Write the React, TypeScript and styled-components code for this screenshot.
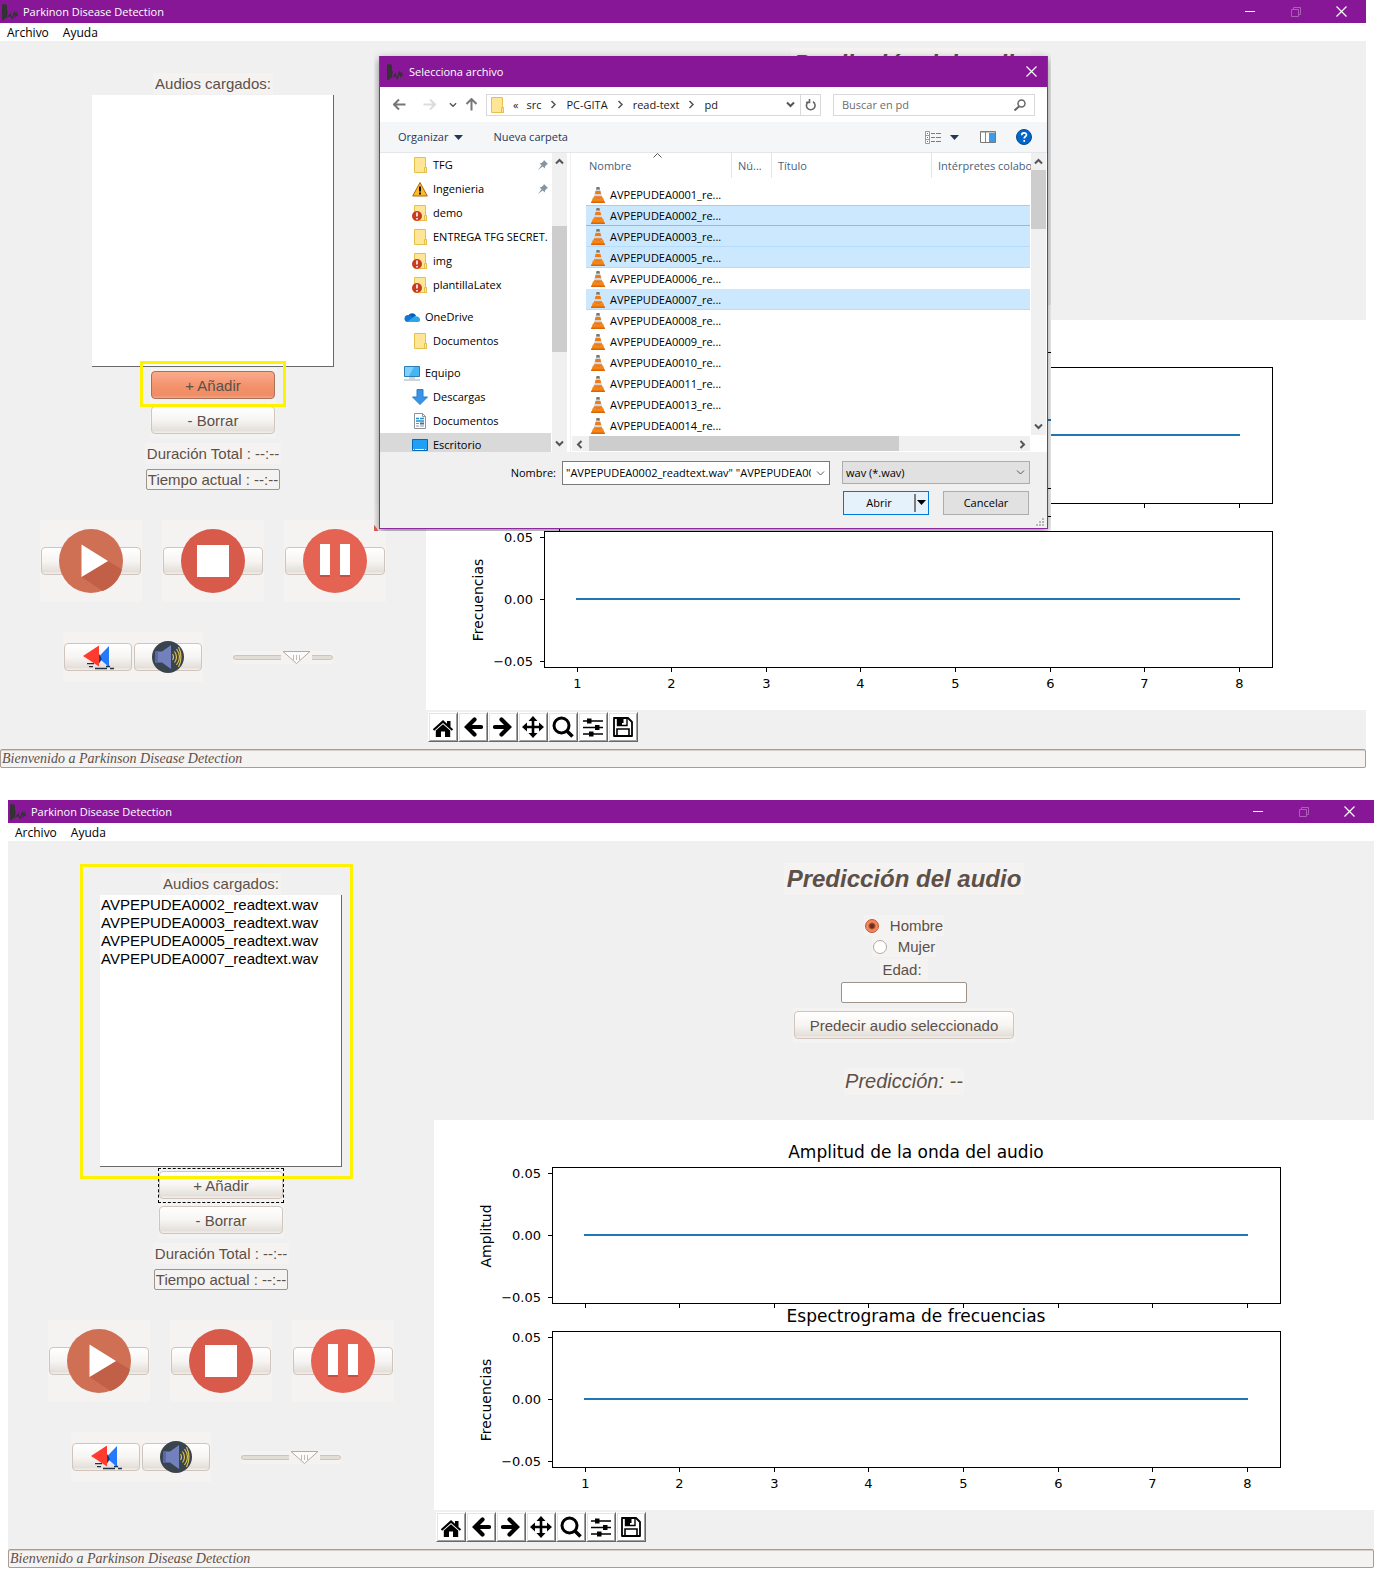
import React from "react";
import styled, { createGlobalStyle, css } from "styled-components";

const GlobalStyle = createGlobalStyle`
  *, *::before, *::after { box-sizing: border-box; }
  body { margin: 0; background: #fff; }
  button, input, select { margin: 0; font: inherit; color: inherit; }
`;

const SYSTEM = `"Open Sans", "Noto Sans", sans-serif`;
const ARIAL = `"Liberation Sans", Arial, sans-serif`;
const PURPLE = "#881798";

/* ---------- window frame ---------- */

const Page = styled.main`
  display: flex;
  flex-direction: column;
  gap: 32px;
  padding-bottom: 8px;
  font-family: ${SYSTEM};
  font-size: 11px;
  color: #000;
`;

const AppWindow = styled.section<{ $second?: boolean }>`
  position: relative;
  display: flex;
  flex-direction: column;
  margin: ${(p) => (p.$second ? "0 2px 0 8px" : "0 10px 0 0")};
  background: #f0f0f0;
`;

const TitleBar = styled.header<{ $tall?: boolean }>`
  display: flex;
  align-items: center;
  gap: ${(p) => (p.$tall ? 6 : 5)}px;
  height: ${(p) => (p.$tall ? 31 : 23)}px;
  padding-left: ${(p) => (p.$tall ? 7 : 2)}px;
  padding-right: ${(p) => (p.$tall ? 6 : 4)}px;
  background: ${PURPLE};
  color: #fff;
`;

const WindowName = styled.span`
  flex: 1;
  line-height: 18px;
`;

const CaptionButton = styled.button<{ $dim?: boolean; $narrow?: boolean }>`
  display: flex;
  justify-content: center;
  align-items: center;
  width: ${(p) => (p.$narrow ? 20 : 41)}px;
  height: 20px;
  padding: 0;
  border: 0;
  background: none;
  color: #fff;
  opacity: ${(p) => (p.$dim ? 0.3 : 1)};
`;

const MenuBar = styled.nav`
  display: flex;
  align-items: flex-start;
  gap: 14px;
  height: 18px;
  padding-left: 7px;
  background: #fff;
  font-size: 12px;
`;

const MenuItem = styled.button`
  padding: 0;
  border: 0;
  background: none;
  line-height: 20px;
`;

const Content = styled.div`
  display: grid;
  grid-template-columns: 426px minmax(0, 1fr);
  font-family: ${ARIAL};
  font-size: 15px;
  color: #5c5049;
`;

const StatusBar = styled.footer`
  height: 19px;
  padding: 0 1px;
  border: 1px solid #a99c91;
  border-radius: 2px;
  background: #f5f3f1;
  box-shadow: inset 0 1px #d8d0c8;
  font-family: "Liberation Serif", "Times New Roman", serif;
  font-size: 14px;
  font-style: italic;
  line-height: 17px;
  color: #5c5049;
`;

/* ---------- left column ---------- */

const Player = styled.div`
  display: flex;
  flex-direction: column;
  align-items: center;
  padding-top: 32px;
`;

const Caption = styled.div`
  padding: 0 2px;
  background: #f5f3f1;
  line-height: 21px;
  white-space: pre;
`;

const FileBox = styled.ul`
  width: 242px;
  height: 272px;
  margin: 1px 0;
  padding: 1px;
  border: solid #696969;
  border-width: 0 1px 1px 0;
  background: #fff;
  color: #000;
  list-style: none;
  line-height: 18px;
`;

const ButtonFrame = styled.div<{ $focus?: boolean }>`
  display: flex;
  padding: 3px 1px 4px;
  background: #f5f3f1;
  ${(p) =>
    p.$focus &&
    css`
      outline: 1px dashed #000;
      outline-offset: -1px;
    `}
`;

const Face = css`
  border: 1px solid #cfc5bd;
  border-radius: 4px;
  background: linear-gradient(#fff, #f7f5f3 50%, #e4dfda 90%, #f3efec);
`;

const PushButton = styled.button<{ $hot?: boolean; $wide?: boolean }>`
  ${Face}
  width: ${(p) => (p.$wide ? 220 : 124)}px;
  height: 28px;
  padding: 1px 0 0;
  line-height: 25px;
  ${(p) =>
    p.$hot &&
    css`
      border-color: #a9705a;
      background: linear-gradient(#fbab8b, #f29069 60%, #ef8e66 90%, #f4a684);
    `}
`;

const Elapsed = styled.div`
  margin: 5px 0 30px;
  padding: 0 1px;
  border: 1px solid #a0938a;
  border-radius: 2px;
  background: #f5f3f1;
  line-height: 19px;
`;

const Duration = styled(Caption)`
  margin-top: 5px;
`;

const Transport = styled.div`
  display: flex;
  gap: 20px;
`;

const RoundButton = styled.button`
  display: grid;
  place-items: center;
  width: 102px;
  height: 82px;
  padding: 0 1px;
  border: 0;
  background: #f5f3f1;

  &::before {
    ${Face}
    content: "";
    grid-area: 1 / 1;
    width: 100%;
    height: 28px;
  }

  svg {
    grid-area: 1 / 1;
    z-index: 1;
  }
`;

const VolumeRow = styled.div`
  display: flex;
  align-items: center;
  gap: 30px;
  padding: 30px 30px 67px 0;
`;

const IconPair = styled.div`
  display: flex;
  align-items: center;
  gap: 2px;
  height: 50px;
  padding: 0 1px;
  background: #f5f3f1;
`;

const IconButton = styled.button`
  ${Face}
  display: flex;
  align-items: center;
  justify-content: center;
  width: 68px;
  height: 28px;
  padding: 0;
`;

const Volume = styled.input`
  appearance: none;
  width: 100px;
  height: 13px;
  background: #f5f3f1;

  &::-webkit-slider-runnable-track {
    height: 5px;
    border: 1px solid #cdc5bd;
    border-radius: 3px;
    background: #e2dcd7;
  }

  &::-webkit-slider-thumb {
    appearance: none;
    width: 31px;
    height: 13px;
    margin-top: -5px;
    border: 0;
    background: url("data:image/svg+xml,%3Csvg xmlns='http://www.w3.org/2000/svg' width='31' height='13'%3E%3Crect width='31' height='13' fill='%23f5f3f1'/%3E%3Cpath d='M2 .5h27l-13.500 12z' fill='%23fcfbfa' stroke='%23b5aaa1'/%3E%3Cpath d='M12.500 4v5M15.500 4v5M18.500 4v5' stroke='%23c4bab2'/%3E%3C/svg%3E");
  }
`;

/* ---------- right column ---------- */

const Results = styled.div`
  display: flex;
  flex-direction: column;
`;

const Prediction = styled.form<{ $behind?: boolean }>`
  display: flex;
  flex-direction: column;
  align-items: center;
  height: 279px;
  padding: ${(p) => (p.$behind ? "7px 0 0 30px" : "22px 0 0")};
`;

const Heading = styled.h1`
  margin: 0 0 20px;
  padding: 0 3px;
  background: #f5f3f1;
  font-size: 24px;
  font-style: italic;
  font-weight: bold;
  line-height: 32px;
`;

const RadioLabel = styled.label`
  display: flex;
  align-items: center;
  gap: 11px;
  padding: 0 1px;
  background: #f5f3f1;
  line-height: 21px;
`;

const Radio = styled.input`
  appearance: none;
  width: 14px;
  height: 14px;
  margin: 0;
  border: 1px solid #b5aaa1;
  border-radius: 50%;
  background: #fff;

  &:checked {
    border-color: #c2572f;
    background: radial-gradient(circle, #6b3220 0 2px, #f5865c 4px);
  }
`;

const AgeLabel = styled.label`
  margin: 2px 0;
  padding: 0 6px 0 2px;
  background: #f5f3f1;
  line-height: 21px;
`;

const AgeInput = styled.input`
  width: 126px;
  height: 21px;
  margin-bottom: 5px;
  padding: 0 3px;
  border: 1px solid #a0938a;
  border-radius: 2px;
  background: #fff;
`;

const Outcome = styled.output`
  margin-top: 25px;
  padding: 0 1px;
  background: #f5f3f1;
  font-size: 20px;
  font-style: italic;
  line-height: 27px;
`;

const Plot = styled.svg`
  display: block;
  width: 100%;
  background: #fff;
  font-family: "DejaVu Sans", sans-serif;
  font-size: 13px;
  fill: #000;
`;

const PlotTools = styled.div`
  display: flex;
  padding: 2px 2px 7px;
`;

const PlotTool = styled.button`
  display: flex;
  align-items: center;
  justify-content: center;
  width: 30px;
  height: 30px;
  padding: 0;
  border: 1px solid;
  border-color: #fff #696969 #696969 #fff;
  background: #fff;
  box-shadow: inset 1px 1px #e3e3e3, inset -1px -1px #a0a0a0;
`;

/* ---------- mark drawn over the window ---------- */

const Mark = styled.div<{ $x: number; $y: number; $w: number; $h: number }>`
  position: absolute;
  left: ${(p) => p.$x}px;
  top: ${(p) => p.$y}px;
  width: ${(p) => p.$w}px;
  height: ${(p) => p.$h}px;
  border: 3px solid #fff200;
  pointer-events: none;
`;

/* ---------- file dialog ---------- */

const DialogLayer = styled.div`
  position: absolute;
  left: 374px;
  top: 50px;
  padding: 6px 3px 2px 5px;
  overflow: hidden;
`;

const Backdrop = styled.svg`
  position: absolute;
  left: 0;
  top: 0;
`;

const Dialog = styled.div`
  position: relative;
  display: flex;
  flex-direction: column;
  width: 669px;
  border: 1px solid #8e2a9f;
  border-top: 0;
  background: #f0f0f0;
  box-shadow: 0 3px 8px rgba(0, 0, 0, 0.45);
`;

const NavRow = styled.div`
  display: flex;
  align-items: center;
  height: 35px;
  padding: 0 12px 0 10px;
  background: #fff;
`;

const NavButton = styled.button<{ $w: number }>`
  display: flex;
  align-items: center;
  justify-content: center;
  width: ${(p) => p.$w}px;
  height: 20px;
  padding: 0;
  border: 0;
  background: none;
`;

const Address = styled.div`
  display: flex;
  align-items: center;
  gap: 8px;
  width: 335px;
  height: 22px;
  padding-left: 2px;
  border: 1px solid #d9d9d9;
  color: #1a1a1a;
`;

const Crumb = styled.span`
  line-height: 18px;
  white-space: nowrap;
`;

const AddressEnd = styled.div`
  display: flex;
  align-self: stretch;
  align-items: center;
  margin-left: auto;
`;

const Refresh = styled(NavButton)`
  border-left: 1px solid #d9d9d9;
`;

const SearchBox = styled.label`
  display: flex;
  align-items: center;
  flex: 1;
  height: 22px;
  margin-left: 12px;
  padding: 0 8px;
  border: 1px solid #d9d9d9;
`;

const SearchInput = styled.input`
  flex: 1;
  min-width: 0;
  padding: 0;
  border: 0;
  outline: 0;
  line-height: 18px;
  &::placeholder { color: #6d6d6d; opacity: 1; }
`;

const CommandRow = styled.div`
  display: flex;
  align-items: center;
  height: 31px;
  padding: 0 8px 0 18px;
  border-bottom: 1px solid #e4e7ea;
  background: #f5f6f7;
  color: #1e395b;
`;

const Command = styled.button`
  display: flex;
  align-items: center;
  gap: 6px;
  margin-right: 30px;
  padding: 0;
  border: 0;
  background: none;
  line-height: 18px;
`;

const ViewTools = styled.div`
  display: flex;
  align-items: center;
  margin-left: auto;
`;

const Browser = styled.div`
  display: flex;
  height: 299px;
  background: #fff;
`;

const Tree = styled.ul`
  width: 171px;
  margin: 0;
  padding: 0;
  overflow: hidden;
  list-style: none;
`;

const TreeItem = styled.li<{ $root?: boolean; $current?: boolean; $gap?: boolean }>`
  display: flex;
  align-items: center;
  gap: 5px;
  height: 24px;
  margin-top: ${(p) => (p.$gap ? 8 : 0)}px;
  padding-left: ${(p) => (p.$root ? 24 : 32)}px;
  background: ${(p) => (p.$current ? "#d9d9d9" : "transparent")};
  line-height: 18px;
  white-space: nowrap;

  svg { flex: none; }
`;

const TreeName = styled.span`
  flex: 1;
`;

const ScrollBar = styled.div<{ $row?: boolean }>`
  display: flex;
  flex-direction: ${(p) => (p.$row ? "row" : "column")};
  ${(p) => (p.$row ? "height: 15px;" : "width: 15px;")}
  background: #f0f0f0;
`;

const ScrollButton = styled.button`
  display: flex;
  flex: none;
  align-items: center;
  justify-content: center;
  width: 15px;
  height: 17px;
  padding: 0;
  border: 0;
  background: none;
`;

const ScrollTrack = styled.div<{ $row?: boolean; $before: number }>`
  display: flex;
  flex: 1;
  flex-direction: ${(p) => (p.$row ? "row" : "column")};
  ${(p) => (p.$row ? "padding-left" : "padding-top")}: ${(p) => p.$before}px;
`;

const ScrollThumb = styled.div<{ $size: number }>`
  flex: 0 0 ${(p) => p.$size}px;
  background: #cdcdcd;
`;

const TreeScroll = styled(ScrollBar)`
  margin: 0 3px 0 1px;
`;

const Listing = styled.div`
  display: flex;
  flex: 1;
  min-width: 0;
  border-left: 1px solid #f0f0f0;
`;

const ListingMain = styled.div`
  display: flex;
  flex: 1;
  flex-direction: column;
  min-width: 0;
`;

const ListingScroll = styled(ScrollBar)`
  height: 282px;
  margin: 0 1px;
`;

const FileTable = styled.table`
  width: calc(100% - 15px);
  height: 283px;
  margin-left: 15px;
  border-collapse: separate;
  border-spacing: 0;
  table-layout: fixed;

  tbody::before {
    content: "";
    display: block;
    height: 6px;
  }
`;

const ColumnHead = styled.th`
  height: 25px;
  padding: 0 0 0 6px;
  border-right: 1px solid #e5e5e5;
  color: #4c607a;
  font-weight: normal;
  text-align: left;
  white-space: nowrap;

  &:first-child { padding-left: 3px; }
  &:last-child { border-right: 0; }
`;

const SortHead = styled.div`
  display: flex;
  justify-content: space-between;
  height: 25px;
  line-height: 25px;

  svg { margin-right: 69px; }
`;

const FileRow = styled.tr<{ $selected?: boolean; $focus?: boolean }>`
  td {
    height: 21px;
    padding: 0;
    background: ${(p) => (p.$selected ? "#cce8ff" : "#fff")};
    box-shadow: ${(p) =>
      p.$focus ? "inset 0 1px #99d1ff, inset 0 -1px #7cc0f8" : p.$selected ? "inset 0 -1px #b3dcff" : "none"};
  }
`;

const FileName = styled.div`
  display: flex;
  align-items: center;
  gap: 5px;
  height: 21px;
  padding-left: 5px;
  line-height: 18px;
  white-space: nowrap;
`;

const HScroll = styled(ScrollBar)`
  margin-left: 1px;
`;

const Fields = styled.div`
  display: grid;
  grid-template-columns: 176px 268px 188px;
  column-gap: 6px;
  row-gap: 6px;
  padding: 9px 0 0;
`;

const FieldLabel = styled.label`
  text-align: right;
  line-height: 24px;
`;

const NameBox = styled.div`
  display: flex;
  align-items: center;
  height: 24px;
  padding: 0 4px 0 3px;
  border: 1px solid #7a7a7a;
  background: #fff;
`;

const NameInput = styled.input`
  flex: 1;
  min-width: 0;
  margin-right: 5px;
  padding: 0;
  border: 0;
  outline: 0;
  background: none;
  line-height: 18px;
`;

const TypeBox = styled.div`
  display: grid;
  align-items: center;
  height: 23px;
  margin-left: 6px;
  margin-right: -6px;
  border: 1px solid #adadad;
  background: #e1e1e1;

  svg {
    grid-area: 1 / 1;
    justify-self: end;
    margin-right: 4px;
    pointer-events: none;
  }
`;

const TypeSelect = styled.select`
  grid-area: 1 / 1;
  appearance: none;
  width: 100%;
  padding: 0 20px 0 3px;
  border: 0;
  background: none;
`;

const Actions = styled.div`
  display: flex;
  gap: 14px;
  justify-content: flex-end;
  padding: 6px 18px 0 0;
`;

const ActionButton = styled.button<{ $primary?: boolean }>`
  display: flex;
  align-items: center;
  justify-content: center;
  width: 86px;
  height: 24px;
  padding: 0 0 1px;
  border: 1px solid ${(p) => (p.$primary ? "#0078d7" : "#adadad")};
  background: ${(p) => (p.$primary ? "#e5f1fb" : "#e1e1e1")};
`;

const SplitLabel = styled.span`
  flex: 1;
`;

const SplitArrow = styled.span`
  display: flex;
  align-items: center;
  height: 18px;
  padding: 0 2px 0 1px;
  border-left: 2px solid #7d7d7d;
`;

const GripRow = styled.div`
  display: flex;
  justify-content: flex-end;
  height: 13px;
  padding: 3px 3px 0 0;
`;

/* ---------- icons ---------- */

const AppIcon = () => (
  <svg width="16" height="16" viewBox="0 0 16 16" fill="#333">
    <path d="M0 .5L3.500 0 5 1.500v3.500l.8 4-.6 2 .2 3H3.500L2 16H0z" />
    <path d="M6 12h1.500l.8-2 1 3.500 1.200 1 1-3.500.9-3.500 1 4.500 1-3 .8 2.500H16" fill="none" stroke="#333" strokeWidth="1.300" />
  </svg>
);

const CloseIcon = ({ size = 11 }: { size?: number }) => (
  <svg width={size} height={size} viewBox="0 0 11 11" stroke="currentColor" strokeWidth="1.200">
    <path d="M.5.5l10 10M10.500.5l-10 10" />
  </svg>
);

const Chevron = ({ dir, w = 2, color = "#555", size = 9 }: { dir: "up" | "down" | "left" | "right"; w?: number; color?: string; size?: number }) => {
  const turn = { down: 0, left: 90, up: 180, right: 270 }[dir];
  return (
    <svg width={size} height={size} viewBox="0 0 9 9">
      <path d="M1 2.500l3.500 3.500L8 2.500" transform={`rotate(${turn} 4.500 4.500)`} fill="none" stroke={color} strokeWidth={w} />
    </svg>
  );
};

const SortIcon = () => (
  <svg width="9" height="5" viewBox="0 0 9 5">
    <path d="M.5 4.500l4-4 4 4" fill="none" stroke="#555" />
  </svg>
);

const Caret = ({ color = "#1e395b" }: { color?: string }) => (
  <svg width="9" height="5" viewBox="0 0 9 5">
    <path d="M0 0h9L4.500 5z" fill={color} />
  </svg>
);

const Arrow = ({ dir, color }: { dir: "left" | "right" | "up"; color: string }) => (
  <svg width="13" height="13" viewBox="0 0 13 13">
    <path
      d="M12.500 6.500H1.500M6 1.500l-5 5 5 5"
      transform={`rotate(${{ left: 0, up: 90, right: 180 }[dir]} 6.500 6.500)`}
      fill="none"
      stroke={color}
      strokeWidth="2"
    />
  </svg>
);

const FolderIcon = ({ alert }: { alert?: boolean }) => (
  <svg width="16" height="16" viewBox="0 0 16 16">
    <path d="M2.500.5h11v10h1v5h-12z" fill="#ffe596" stroke="#e6c04c" />
    <path d="M12.500 10.500h2v5h-2z" fill="#ffe596" stroke="#e6c04c" />
    {alert && (
      <>
        <circle cx="5" cy="11" r="5" fill="#c93a22" />
        <path d="M5 7.500v4M5 13v1.500" stroke="#fff" strokeWidth="1.600" />
      </>
    )}
  </svg>
);

const WarningIcon = () => (
  <svg width="16" height="16" viewBox="0 0 16 16">
    <path d="M8 1.500L15.300 15H.7z" fill="#fdb92c" stroke="#a8690c" strokeLinejoin="round" />
    <path d="M8 5.500v5M8 11.500V13.500" stroke="#111" strokeWidth="2" />
  </svg>
);

const CloudIcon = () => (
  <svg width="16" height="16" viewBox="0 0 16 16">
    <path d="M4 7a4.500 4.500 0 0 1 8-.5l-3 4L2 11z" fill="#0a5fb4" />
    <path d="M4 13a3.500 3.500 0 0 1 0-7c2 0 3.500 1 5 2.500L6 13z" fill="#0f78d4" />
    <path d="M3 13l6-4.500c2-2.500 6.500-1 7 1.500s-1.500 3-2.500 3z" fill="#28a8ea" />
  </svg>
);

const ComputerIcon = () => (
  <svg width="16" height="16" viewBox="0 0 16 16">
    <path d="M.5 1.500h15v10H.5z" fill="#45b5f5" stroke="#2c7fb5" />
    <path d="M1 2h9l-5 9H1z" fill="#7fd0fb" />
    <path d="M5 13h6M0 15h16" stroke="#9aa9b5" />
  </svg>
);

const DownloadIcon = () => (
  <svg width="16" height="16" viewBox="0 0 16 16">
    <path d="M5 .5h6v7.500h4.500L8 15.500.5 8H5z" fill="#3a93e6" stroke="#2b7bc8" />
  </svg>
);

const DocumentIcon = () => (
  <svg width="16" height="16" viewBox="0 0 16 16">
    <path d="M2.500.5h8l3 3v12h-11z" fill="#fff" stroke="#8c9499" />
    <path d="M10.500.5v3h3" fill="none" stroke="#8c9499" />
    <path d="M4 5.500h3M8 5.500h4M4 8h8" stroke="#1c8fd0" strokeWidth="1.300" />
    <path d="M4 10.500h3M4 13h3M8 13h4" stroke="#8c9499" />
    <path d="M8 9.500h4v2H8z" fill="#41719c" />
  </svg>
);

const DesktopIcon = () => (
  <svg width="16" height="16" viewBox="0 0 16 16">
    <path d="M.5 2.500h15v11H.5z" fill="#1fa0f5" stroke="#0769b3" />
    <path d="M1 12.500h14" stroke="#fff" strokeDasharray="1 1 9 1" />
  </svg>
);

const PinIcon = () => (
  <svg width="10" height="10" viewBox="0 0 10 10" fill="#8795a1">
    <path d="M6 0l4 4-1.200.5L7 6.500 6.800 8.500 4.700 6.400 0 10l3.600-4.700L1.500 3.200l2-.2L5.500 1.200z" />
  </svg>
);

const ConeIcon = () => (
  <svg width="14" height="16" viewBox="0 0 14 16">
    <path d="M2 10.500h10l2 5.500H0z" fill="#f6850f" />
    <path d="M.4 14.500h13.200l.4 1.500H0z" fill="#d9640a" />
    <path d="M5.600 0h2.800l3 11c-1 1.500-7.800 1.500-8.800 0z" fill="#d3d6d6" />
    <path d="M5.600 0h2.800l.6 2.500H5z" fill="#77776e" />
    <path d="M4.600 4h4.800l.8 3H3.800zM3.100 9.300h7.800l.5 1.700c-1 1.500-7.800 1.500-8.800 0z" fill="#ef7a1a" />
  </svg>
);

const SearchIcon = () => (
  <svg width="12" height="12" viewBox="0 0 12 12" fill="none" stroke="#666">
    <circle cx="7.500" cy="4.500" r="3.500" strokeWidth="1.500" />
    <path d="M5 7.500L.5 11.500" strokeWidth="2" />
  </svg>
);

const RefreshIcon = () => (
  <svg width="11" height="12" viewBox="0 0 11 12" fill="none" stroke="#666" strokeWidth="1.600">
    <path d="M8 2.800a4.300 4.300 0 1 1-4.500 0" />
    <path d="M4.500 0v3.500H1" />
  </svg>
);

const ViewIcon = () => (
  <svg width="16" height="13" viewBox="0 0 16 13">
    <path d="M.5.5h4v12h-4zM.5 4.500h4M.5 8.500h4" fill="#fff" stroke="#999" />
    <path d="M6 2.500h4M11 2.500h5M6 6.500h4M11 6.500h5M6 10.500h4M11 10.500h5" stroke="#7c7c7c" />
    <path d="M2 2.500h1M2 6.500h1" stroke="#2a7ad0" />
    <path d="M2 10.500h1" stroke="#d03a2a" />
  </svg>
);

const PaneIcon = () => (
  <svg width="16" height="12" viewBox="0 0 16 12">
    <path d="M.5.5h15v11H.5z" fill="#fff" stroke="#777" />
    <path d="M0 1h16M5.500 1v10" stroke="#888" />
    <path d="M9 2h6v9H9z" fill="#3d9be9" />
  </svg>
);

const HelpIcon = () => (
  <svg width="16" height="16" viewBox="0 0 16 16">
    <circle cx="8" cy="8" r="7.500" fill="#0066cc" stroke="#0b4a8c" />
    <path d="M5.700 6.200c0-3 4.800-3 4.800-.4 0 1.800-2.300 1.700-2.300 3.700M8.200 11v1.800" fill="none" stroke="#fff" strokeWidth="1.700" />
  </svg>
);

const GripIcon = () => (
  <svg width="8" height="8" viewBox="0 0 8 8" fill="#b8b8b8">
    <path d="M6 0h2v2H6zM3 3h2v2H3zM6 3h2v2H6zM0 6h2v2H0zM3 6h2v2H3zM6 6h2v2H6z" />
  </svg>
);

const PlayIcon = () => (
  <svg width="64" height="64" viewBox="0 0 64 64">
    <circle cx="32" cy="32" r="32" fill="#cf7055" />
    <path d="M49 32l14 8.500A32 32 0 0 1 43.500 62L22.500 48z" fill="#c16047" />
    <path d="M22.500 15.500L49 32 22.500 48z" fill="#fff" />
  </svg>
);

const StopIcon = () => (
  <svg width="64" height="64" viewBox="0 0 64 64">
    <circle cx="32" cy="32" r="32" fill="#d75a4a" />
    <path d="M16 16h32v32H16z" fill="#fff" />
  </svg>
);

const PauseIcon = () => (
  <svg width="64" height="64" viewBox="0 0 64 64">
    <circle cx="32" cy="32" r="32" fill="#e56353" />
    <path d="M17 17h10v31H17zM37 17h10v31H37z" fill="#c44f42" />
    <path d="M17 15h10v31H17zM37 15h10v31H37z" fill="#fff" />
  </svg>
);

const RewindIcon = () => (
  <svg width="32" height="26" viewBox="0 0 32 26">
    <path d="M27 2v21l-11-9.500z" fill="#2479ff" />
    <path d="M16 8l4 7-4 6z" fill="#1b3f77" />
    <path d="M17 1.500v21L1 12z" fill="#ff3b30" />
    <path d="M5 19.700h7M7 22.700h4" fill="none" stroke="#203448" strokeWidth="1.200" />
    <path d="M13 24.500h12M24 22.500h4M28 24.500h4" fill="none" stroke="#203448" strokeWidth="1.500" />
  </svg>
);

const SpeakerIcon = () => (
  <svg width="32" height="32" viewBox="0 0 32 32">
    <circle cx="16" cy="16" r="16" fill="#38444e" />
    <path d="M3 10.500h7L19 4v24l-9-6.500H3z" fill="#7281bd" />
    <path d="M3 10.500h3v11H3z" fill="#5a68a3" />
    <path d="M20.500 13q2 3 0 6M22.500 10.500q4 5.500 0 11M24.500 8q6 8 0 16M26.500 6q5 10 0 20" fill="none" stroke="#e0c04e" strokeWidth="1.200" />
  </svg>
);

const HomeIcon = () => (
  <svg width="22" height="20" viewBox="0 0 22 20">
    <path d="M11 3L.8 12.300l1.400 1.400L11 6l8.800 7.700 1.400-1.400L18.500 10V4H15v2.700z" />
    <path d="M11 7.200L3.800 13.500V20H9v-5.500h4V20h5.200v-6.500z" />
  </svg>
);

const BigArrow = ({ flip }: { flip?: boolean }) => (
  <svg width="20" height="20" viewBox="0 0 20 20">
    <path d="M18 10H5M11.500 2.500L4 10l7.500 7.500" transform={flip ? "rotate(180 10 10)" : undefined} fill="none" stroke="#000" strokeWidth="4.200" strokeLinecap="round" />
  </svg>
);

const MoveIcon = () => (
  <svg width="22" height="22" viewBox="0 0 22 22">
    <path d="M11 2v18M2 11h18" stroke="#000" strokeWidth="2.600" />
    <path d="M11 0l4.500 5h-9zM11 22l4.500-5h-9zM0 11l5-4.500v9zM22 11l-5-4.500v9z" />
  </svg>
);

const ZoomIcon = () => (
  <svg width="22" height="22" viewBox="0 0 22 22" fill="none" stroke="#000">
    <circle cx="9.500" cy="9.500" r="7.500" strokeWidth="3" />
    <path d="M15 15l5.500 5.500" strokeWidth="3.500" />
  </svg>
);

const SlidersIcon = () => (
  <svg width="20" height="20" viewBox="0 0 20 20">
    <path d="M0 4h20M0 10.500h20M0 17h20" stroke="#000" strokeWidth="1.600" />
    <path d="M4 1.500h4.500v5H4zM12 8h4.500v5H12zM6 14.500h4.500v5H6z" />
  </svg>
);

const SaveIcon = () => (
  <svg width="20" height="20" viewBox="0 0 20 20">
    <path d="M1 1h14l4 4v14H1z" fill="#fff" stroke="#000" strokeWidth="1.800" strokeLinejoin="round" />
    <path d="M4.500 1v7.500H14V1" fill="none" stroke="#000" strokeWidth="1.400" />
    <path d="M5 1h5.500v5H9v2H5z" />
    <path d="M4 19v-7h12v7" fill="none" stroke="#000" strokeWidth="1.600" />
  </svg>
);

/* ---------- plots ---------- */

const TICKS = [1, 2, 3, 4, 5, 6, 7, 8];
const tickX = (n: number) => Math.floor(151 + (n - 1) * 94.6) + 0.5;

function Axes({ top, label, title, labelled, bare }: { top: number; label: string; title?: string; labelled?: boolean; bare?: boolean }) {
  const levels: [string, number][] = [
    ["0.05", top + 6],
    ["0.00", top + 68],
    ["−0.05", top + 130],
  ];
  return (
    <g>
      <rect x="118.500" y={top + 0.5} width="728" height="136" fill="#fff" stroke="#000" />
      {TICKS.map((n) => (
        <path key={n} d={`M${tickX(n)} ${top + 137}v4`} stroke="#000" />
      ))}
      {labelled &&
        TICKS.map((n) => (
          <text key={n} x={tickX(n)} y={top + 157} textAnchor="middle">{n}</text>
        ))}
      {levels.map(([name, y]) => (
        <path key={name} d={`M114 ${y + 0.5}h4`} stroke="#000" />
      ))}
      {!bare &&
        levels.map(([name, y]) => (
          <text key={name} x="107" y={y + 5} textAnchor="end">{name}</text>
        ))}
      <path d={`M150 ${top + 68}h664`} stroke="#1f77b4" strokeWidth="2" />
      {!bare && (
        <text transform={`translate(57 ${top + 69}) rotate(-90)`} fontSize="14" textAnchor="middle">{label}</text>
      )}
      {title && (
        <text x="482" y={top - 9} fontSize="17" textAnchor="middle">{title}</text>
      )}
    </g>
  );
}

function Figure({ behind }: { behind?: boolean }) {
  return (
    <Plot viewBox="0 0 940 390" role="img" aria-label="Gráficas del audio">
      <Axes top={47} label="Amplitud" title={behind ? undefined : "Amplitud de la onda del audio"} bare={behind} />
      <Axes top={211} label="Frecuencias" title={behind ? undefined : "Espectrograma de frecuencias"} labelled />
    </Plot>
  );
}

/* ---------- main window ---------- */

function MainWindow({ id, files, dialog }: { id: string; files: string[]; dialog?: boolean }) {
  return (
    <AppWindow $second={!dialog}>
      <TitleBar>
        <AppIcon />
        <WindowName>Parkinon Disease Detection</WindowName>
        <CaptionButton aria-label="Minimizar">
          <svg width="10" height="11" viewBox="0 0 10 11"><path d="M0 5.500h10" stroke="#fff" /></svg>
        </CaptionButton>
        <CaptionButton aria-label="Maximizar" $dim>
          <svg width="10" height="10" viewBox="0 0 10 10" fill="none" stroke="#fff"><path d="M.5 2.500h7v7h-7zM2.500 2.500v-2h7v7h-2" /></svg>
        </CaptionButton>
        <CaptionButton aria-label="Cerrar"><CloseIcon /></CaptionButton>
      </TitleBar>
      <MenuBar>
        <MenuItem>Archivo</MenuItem>
        <MenuItem>Ayuda</MenuItem>
      </MenuBar>
      <Content>
        <Player>
          <Caption id={`${id}-files`}>Audios cargados:</Caption>
          <FileBox role="listbox" aria-labelledby={`${id}-files`}>
            {files.map((f) => (
              <li key={f} role="option" aria-selected="false">{f}</li>
            ))}
          </FileBox>
          <ButtonFrame $focus={!dialog}>
            <PushButton $hot={dialog}>+ Añadir</PushButton>
          </ButtonFrame>
          <ButtonFrame>
            <PushButton>- Borrar</PushButton>
          </ButtonFrame>
          <Duration>Duración Total : --:--</Duration>
          <Elapsed>Tiempo actual : --:--</Elapsed>
          <Transport>
            <RoundButton aria-label="Reproducir"><PlayIcon /></RoundButton>
            <RoundButton aria-label="Parar"><StopIcon /></RoundButton>
            <RoundButton aria-label="Pausar"><PauseIcon /></RoundButton>
          </Transport>
          <VolumeRow>
            <IconPair>
              <IconButton aria-label="Rebobinar"><RewindIcon /></IconButton>
              <IconButton aria-label="Silenciar"><SpeakerIcon /></IconButton>
            </IconPair>
            <Volume type="range" min={0} max={100} defaultValue={70} aria-label="Volumen" />
          </VolumeRow>
        </Player>
        <Results>
          <Prediction $behind={dialog}>
            <Heading>Predicción del audio</Heading>
            {!dialog && (
              <>
                <RadioLabel><Radio type="radio" name={`${id}-sex`} defaultChecked />Hombre</RadioLabel>
                <RadioLabel><Radio type="radio" name={`${id}-sex`} />Mujer</RadioLabel>
                <AgeLabel htmlFor={`${id}-age`}>Edad:</AgeLabel>
                <AgeInput id={`${id}-age`} type="text" />
                <ButtonFrame>
                  <PushButton type="button" $wide>Predecir audio seleccionado</PushButton>
                </ButtonFrame>
                <Outcome>Predicción: --</Outcome>
              </>
            )}
          </Prediction>
          <Figure behind={dialog} />
          <PlotTools>
            <PlotTool aria-label="Inicio"><HomeIcon /></PlotTool>
            <PlotTool aria-label="Anterior"><BigArrow /></PlotTool>
            <PlotTool aria-label="Siguiente"><BigArrow flip /></PlotTool>
            <PlotTool aria-label="Mover"><MoveIcon /></PlotTool>
            <PlotTool aria-label="Ampliar"><ZoomIcon /></PlotTool>
            <PlotTool aria-label="Ajustes"><SlidersIcon /></PlotTool>
            <PlotTool aria-label="Guardar"><SaveIcon /></PlotTool>
          </PlotTools>
        </Results>
      </Content>
      <StatusBar>Bienvenido a Parkinson Disease Detection</StatusBar>
      {dialog ? (
        <>
          <Mark $x={140} $y={361} $w={146} $h={46} />
          <FileDialog />
        </>
      ) : (
        <Mark $x={72} $y={64} $w={273} $h={315} />
      )}
    </AppWindow>
  );
}

/* ---------- dialog ---------- */

const PLACES: { name: string; icon: React.ReactNode; root?: boolean; pin?: boolean; gap?: boolean; current?: boolean }[] = [
  { name: "TFG", icon: <FolderIcon />, pin: true },
  { name: "Ingenieria", icon: <WarningIcon />, pin: true },
  { name: "demo", icon: <FolderIcon alert /> },
  { name: "ENTREGA TFG SECRET.", icon: <FolderIcon /> },
  { name: "img", icon: <FolderIcon alert /> },
  { name: "plantillaLatex", icon: <FolderIcon alert /> },
  { name: "OneDrive", icon: <CloudIcon />, root: true, gap: true },
  { name: "Documentos", icon: <FolderIcon /> },
  { name: "Equipo", icon: <ComputerIcon />, root: true, gap: true },
  { name: "Descargas", icon: <DownloadIcon /> },
  { name: "Documentos", icon: <DocumentIcon /> },
  { name: "Escritorio", icon: <DesktopIcon />, current: true },
];

const NUMBERS = ["0001", "0002", "0003", "0005", "0006", "0007", "0008", "0009", "0010", "0011", "0013", "0014"];
const CHOSEN = ["0002", "0003", "0005", "0007"];

const PinSlot = styled.span`
  display: flex;
  width: 13px;
`;

function FileDialog() {
  return (
    <DialogLayer>
      <Backdrop width="677" height="481" viewBox="0 0 677 481">
        <path d="M0 455h27v26H0z" fill="#f5f3f1" />
        <circle cx="-24" cy="496" r="32" fill="#e56353" />
        <path d="M67 255h610v226H67z" fill="#fff" />
        <path d="M600 302.500h77M600 438.500h77M600 466.500h77M185.500 466v15" stroke="#000" />
        <path d="M600 370h77" stroke="#1f77b4" strokeWidth="2" />
      </Backdrop>
      <Dialog role="dialog" aria-label="Selecciona archivo">
        <TitleBar $tall>
          <AppIcon />
          <WindowName>Selecciona archivo</WindowName>
          <CaptionButton aria-label="Cerrar" $narrow><CloseIcon /></CaptionButton>
        </TitleBar>
        <NavRow>
          <NavButton $w={19} aria-label="Atrás"><Arrow dir="left" color="#777" /></NavButton>
          <NavButton $w={40} aria-label="Adelante"><Arrow dir="right" color="#dcdcdc" /></NavButton>
          <NavButton $w={8} aria-label="Recientes"><Chevron dir="down" w={1.5} size={8} /></NavButton>
          <NavButton $w={29} aria-label="Subir"><Arrow dir="up" color="#777" /></NavButton>
          <Address>
            <FolderIcon />
            <Crumb>«</Crumb>
            <Crumb>src</Crumb>
            <Chevron dir="right" w={1.5} />
            <Crumb>PC-GITA</Crumb>
            <Chevron dir="right" w={1.5} />
            <Crumb>read-text</Crumb>
            <Chevron dir="right" w={1.5} />
            <Crumb>pd</Crumb>
            <AddressEnd>
              <NavButton $w={19} aria-label="Historial"><Chevron dir="down" /></NavButton>
              <Refresh $w={20} aria-label="Actualizar"><RefreshIcon /></Refresh>
            </AddressEnd>
          </Address>
          <SearchBox>
            <SearchInput type="text" placeholder="Buscar en pd" aria-label="Buscar en pd" />
            <SearchIcon />
          </SearchBox>
        </NavRow>
        <CommandRow>
          <Command>Organizar <Caret /></Command>
          <Command>Nueva carpeta</Command>
          <ViewTools>
            <NavButton $w={16} aria-label="Vista"><ViewIcon /></NavButton>
            <NavButton $w={26} aria-label="Más vistas"><Caret /></NavButton>
            <NavButton $w={42} aria-label="Panel de vista previa"><PaneIcon /></NavButton>
            <NavButton $w={30} aria-label="Ayuda"><HelpIcon /></NavButton>
          </ViewTools>
        </CommandRow>
        <Browser>
          <Tree>
            {PLACES.map((p, i) => (
              <TreeItem key={i} $root={p.root} $gap={p.gap} $current={p.current}>
                {p.icon}
                <TreeName>{p.name}</TreeName>
                {p.pin && <PinSlot><PinIcon /></PinSlot>}
              </TreeItem>
            ))}
          </Tree>
          <TreeScroll>
            <ScrollButton aria-label="Subir"><Chevron dir="up" /></ScrollButton>
            <ScrollTrack $before={56}><ScrollThumb $size={126} /></ScrollTrack>
            <ScrollButton aria-label="Bajar"><Chevron dir="down" /></ScrollButton>
          </TreeScroll>
          <Listing>
            <ListingMain>
              <FileTable>
                <colgroup>
                  <col width="146" />
                  <col width="40" />
                  <col width="160" />
                  <col />
                </colgroup>
                <thead>
                  <tr>
                    <ColumnHead>
                      <SortHead>
                        Nombre <SortIcon />
                      </SortHead>
                    </ColumnHead>
                    <ColumnHead>Nú...</ColumnHead>
                    <ColumnHead>Título</ColumnHead>
                    <ColumnHead>Intérpretes colabo</ColumnHead>
                  </tr>
                </thead>
                <tbody>
                  {NUMBERS.map((n) => (
                    <FileRow key={n} $selected={CHOSEN.includes(n)} $focus={n === "0002"}>
                      <td>
                        <FileName><ConeIcon />{`AVPEPUDEA${n}_re...`}</FileName>
                      </td>
                      <td />
                      <td />
                      <td />
                    </FileRow>
                  ))}
                </tbody>
              </FileTable>
              <HScroll $row>
                <ScrollButton aria-label="Izquierda"><Chevron dir="left" /></ScrollButton>
                <ScrollTrack $row $before={2}><ScrollThumb $size={310} /></ScrollTrack>
                <ScrollButton aria-label="Derecha"><Chevron dir="right" /></ScrollButton>
              </HScroll>
            </ListingMain>
            <ListingScroll>
              <ScrollButton aria-label="Subir"><Chevron dir="up" /></ScrollButton>
              <ScrollTrack $before={0}><ScrollThumb $size={59} /></ScrollTrack>
              <ScrollButton aria-label="Bajar"><Chevron dir="down" /></ScrollButton>
            </ListingScroll>
          </Listing>
        </Browser>
        <Fields>
          <FieldLabel htmlFor="file-name">Nombre:</FieldLabel>
          <NameBox>
            <NameInput id="file-name" type="text" defaultValue={'"AVPEPUDEA0002_readtext.wav" "AVPEPUDEA0003_readtext.wav"'} />
            <Chevron dir="down" w={1} />
          </NameBox>
          <TypeBox>
            <TypeSelect aria-label="Tipo de archivo">
              <option>wav (*.wav)</option>
            </TypeSelect>
            <Chevron dir="down" w={1} />
          </TypeBox>
        </Fields>
        <Actions>
          <ActionButton $primary>
            <SplitLabel>Abrir</SplitLabel>
            <SplitArrow><Caret color="#000" /></SplitArrow>
          </ActionButton>
          <ActionButton>Cancelar</ActionButton>
        </Actions>
        <GripRow><GripIcon /></GripRow>
      </Dialog>
    </DialogLayer>
  );
}

export default function App() {
  return (
    <Page>
      <GlobalStyle />
      <MainWindow id="first" files={[]} dialog />
      <MainWindow id="second" files={CHOSEN.map((n) => `AVPEPUDEA${n}_readtext.wav`)} />
    </Page>
  );
}
